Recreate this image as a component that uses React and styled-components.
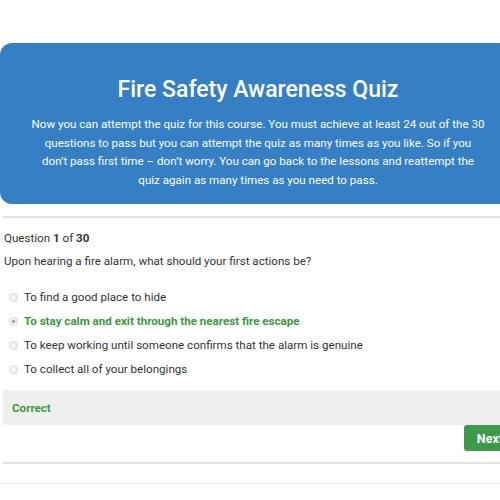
import React from 'react';
import styled, { createGlobalStyle } from 'styled-components';

const GlobalStyle = createGlobalStyle`
  body {
    margin: 0;
    background: #fff;
    overflow: hidden;
    font-family: Roboto, 'Open Sans', sans-serif;
    color: #333;
  }
`;

const introLines = [
  'Now you can attempt the quiz for this course. You must achieve at least 24 out of the 30',
  'questions to pass but you can attempt the quiz as many times as you like. So if you',
  'don’t pass first time – don’t worry. You can go back to the lessons and reattempt the',
  'quiz again as many times as you need to pass.',
];

const answers = [
  { text: 'To find a good place to hide' },
  { text: 'To stay calm and exit through the nearest fire escape', correct: true },
  { text: 'To keep working until someone confirms that the alarm is genuine' },
  { text: 'To collect all of your belongings' },
];

const App = () => (
  <>
    <GlobalStyle />
    <StyledPage>
      <StyledHeader>
        <StyledTitle>Fire Safety Awareness Quiz</StyledTitle>
        <StyledIntro>
          {introLines.map((line, index) => (
            <span key={index}>{line}</span>
          ))}
        </StyledIntro>
      </StyledHeader>

      <StyledQuiz>
        <StyledCounter>
          Question <b>1</b> of <b>30</b>
        </StyledCounter>
        <StyledQuestion>Upon hearing a fire alarm, what should your first actions be?</StyledQuestion>

        <StyledAnswers>
          {answers.map((answer, index) => (
            <StyledAnswer key={index} $correct={answer.correct}>
              <StyledRadio $checked={answer.correct} />
              {answer.text}
            </StyledAnswer>
          ))}
        </StyledAnswers>

        <StyledResult>Correct</StyledResult>
        <StyledActions>
          <StyledNextButton>Next</StyledNextButton>
        </StyledActions>
      </StyledQuiz>
      <StyledFooterRule />
    </StyledPage>
  </>
);

const StyledPage = styled.div`
  width: 516px;
  padding-top: 43px;
`;
const StyledHeader = styled.div`
  background: #3580c4;
  border-radius: 12px;
  height: 161px;
  box-sizing: border-box;
  padding: 31px 20px 0;
  text-align: center;
  color: #fff;
`;
const StyledTitle = styled.h1`
  margin: 0 0 9px;
  font-size: 23px;
  font-weight: 500;
  line-height: 32px;
`;
const StyledIntro = styled.p`
  margin: 0;
  font-size: 11.6px;
  line-height: 18.5px;
  span {
    display: block;
    white-space: nowrap;
  }
`;
const StyledQuiz = styled.div`
  margin: 12px 0 0 3px;
  border-top: 2px solid #e3e3e3;
  border-bottom: 2px solid #e3e3e3;
  padding: 11px 0 11px;
`;
const StyledCounter = styled.div`
  padding-left: 1px;
  font-size: 11.6px;
  line-height: 18px;
  b {
    font-weight: 700;
  }
`;
const StyledQuestion = styled.div`
  padding-left: 1px;
  margin-top: 5px;
  font-size: 11.6px;
  line-height: 18px;
`;
const StyledAnswers = styled.ul`
  list-style: none;
  margin: 15px 0 0;
  padding: 0;
`;
const StyledAnswer = styled.li`
  display: flex;
  align-items: center;
  gap: 6px;
  height: 24px;
  padding-left: 6px;
  font-size: 11.6px;
  color: ${(p) => (p.$correct ? '#3a9a3f' : '#333')};
  font-weight: ${(p) => (p.$correct ? 700 : 400)};
`;
const StyledRadio = styled.span`
  width: 7px;
  height: 7px;
  border-radius: 50%;
  border: 1px solid #d6d6d6;
  background: ${(p) => (p.$checked ? 'radial-gradient(circle, #aaa 0 1.5px, #f4f4f4 2px)' : '#f4f4f4')};
`;
const StyledResult = styled.div`
  margin-top: 9px;
  background: #efefef;
  height: 35px;
  display: flex;
  align-items: center;
  padding-left: 9px;
  font-size: 11.6px;
  font-weight: 700;
  color: #3a9a3f;
`;
const StyledActions = styled.div`
  display: flex;
  justify-content: flex-end;
`;
const StyledNextButton = styled.button`
  height: 26px;
  padding: 0 13px;
  border: none;
  border-radius: 3px;
  background: #3d9a4a;
  color: #fff;
  font-family: inherit;
  font-size: 12.5px;
  font-weight: 700;
`;
const StyledFooterRule = styled.div`
  margin-top: 19px;
  border-top: 1px solid #f0f0f0;
`;

export default App;
